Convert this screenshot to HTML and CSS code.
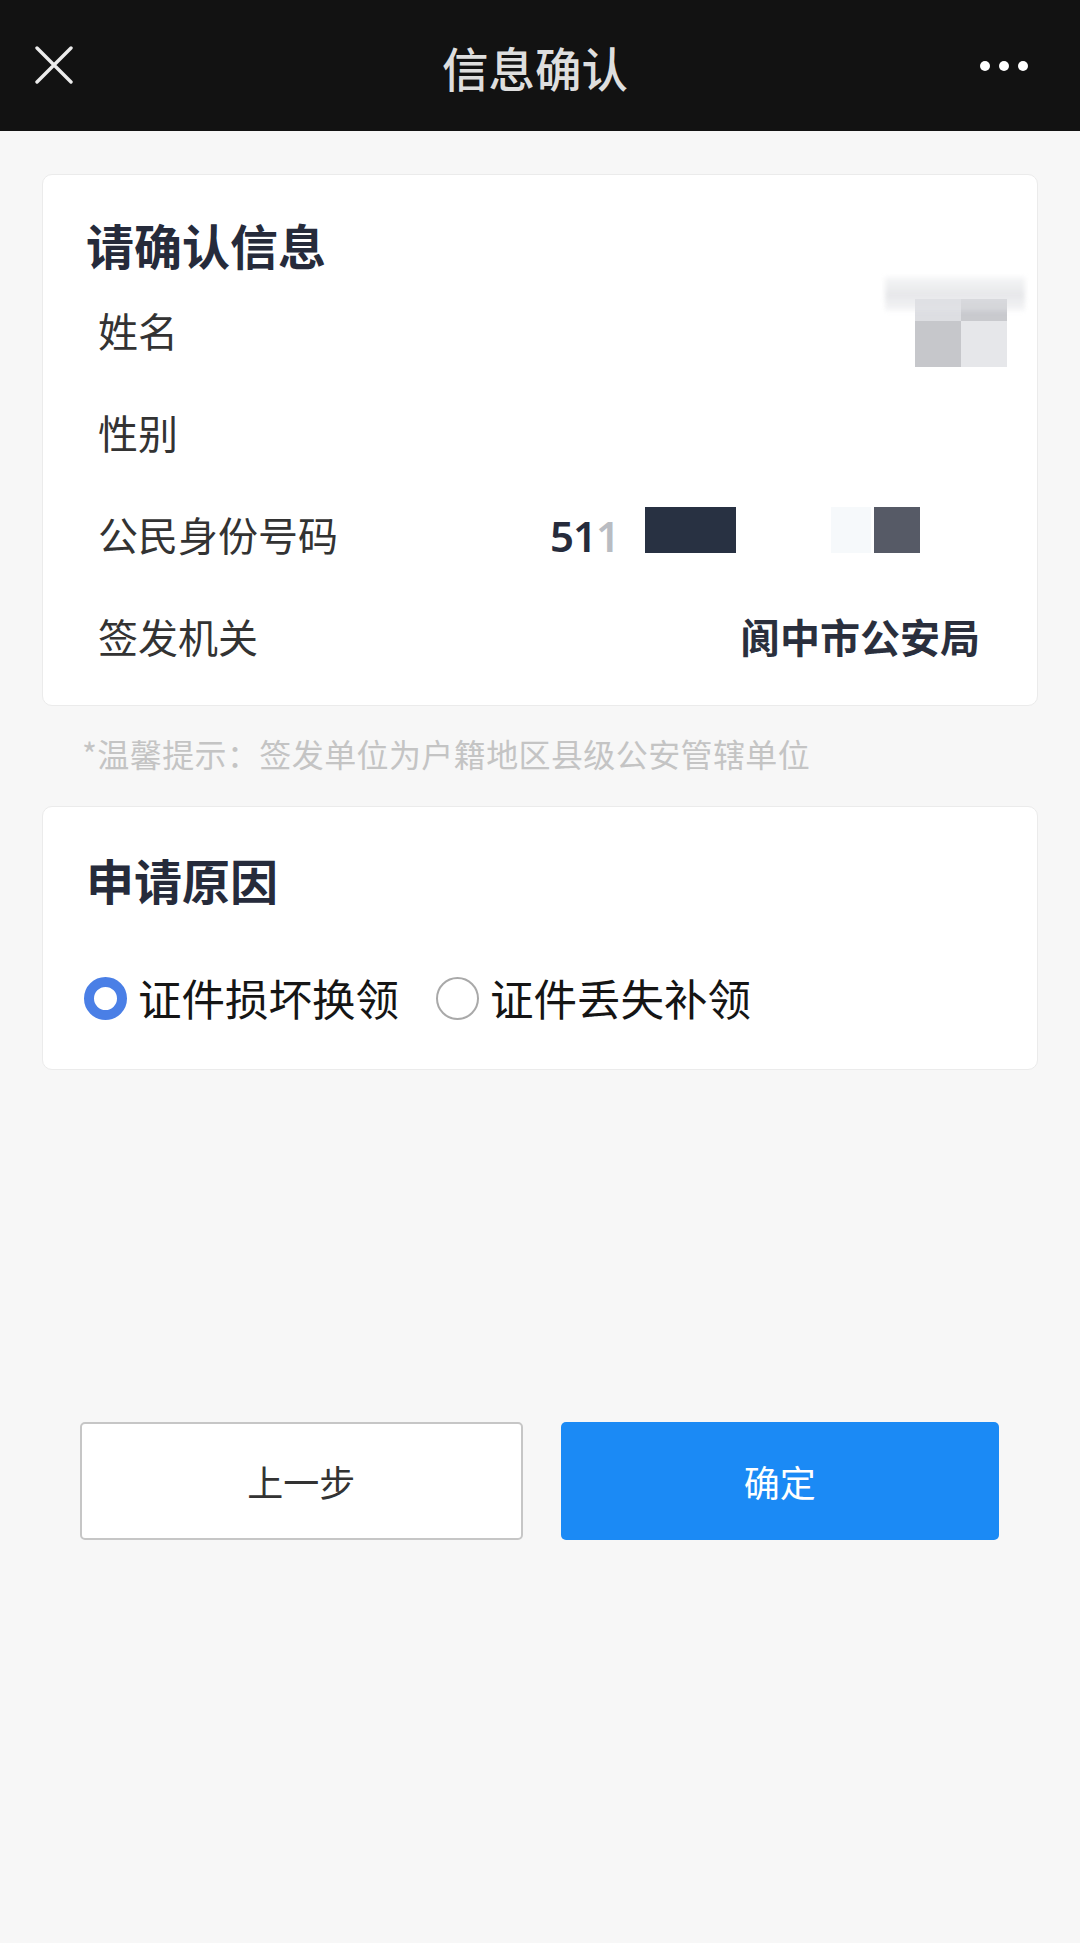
FILE: index.html
```html
<!DOCTYPE html>
<html lang="zh-CN">
<head>
  <meta charset="UTF-8" />
  <meta name="viewport" content="width=device-width, initial-scale=1.0"/>
  <title>信息确认</title>
  <link rel="stylesheet" href="styles.css">
</head>
<body>

  <header class="topbar">
    <span class="topbar-close">
      <svg width="38" height="38" viewBox="0 0 38 38"><path d="M2 2L36 36M36 2L2 36" stroke="#ececec" stroke-width="3.4" stroke-linecap="round"/></svg>
    </span>
    <h1 class="topbar-title">信息确认</h1>
    <span class="topbar-more">
      <svg width="48" height="12" viewBox="0 0 48 12"><circle cx="5" cy="6" r="5" fill="#fff"/><circle cx="24" cy="6" r="5" fill="#fff"/><circle cx="43" cy="6" r="5" fill="#fff"/></svg>
    </span>
  </header>

  <main class="content">
    <section class="card info-card">
      <h2 class="card-title">请确认信息</h2>
      <div class="info-row">
        <span class="info-label">姓名</span>
        <!-- 姓名已打码 -->
        <div class="mosaic">
          <div class="mosaic-grid">
            <span class="m1"></span><span class="m2"></span>
            <span class="m3"></span><span class="m4"></span>
          </div>
          <div class="mosaic-haze"></div>
        </div>
      </div>
      <div class="info-row">
        <span class="info-label">性别</span>
        <span class="info-value"></span>
      </div>
      <div class="info-row">
        <span class="info-label">公民身份号码</span>
        <div class="id-value">
          <span class="id-digits">51<span class="faded">1</span></span>
          <span class="id-block dark"></span>
          <span class="id-block ghost"></span>
          <span class="id-block grey"></span>
        </div>
      </div>
      <div class="info-row">
        <span class="info-label">签发机关</span>
        <span class="info-value">阆中市公安局</span>
      </div>
    </section>

    <p class="tip">*温馨提示：签发单位为户籍地区县级公安管辖单位</p>

    <section class="card reason-card">
      <h2 class="card-title">申请原因</h2>
      <div class="radio-group">
        <label class="radio-item">
          <span class="radio checked"></span>
          <span class="radio-text">证件损坏换领</span>
        </label>
        <label class="radio-item">
          <span class="radio"></span>
          <span class="radio-text">证件丢失补领</span>
        </label>
      </div>
    </section>

    <div class="button-row">
      <button class="btn btn-back">上一步</button>
      <button class="btn btn-ok">确定</button>
    </div>
  </main>

</body>
</html>
```

FILE: styles.css
```css
body {
  font-family: "Noto Sans CJK SC", "Noto Sans", sans-serif;
  background-color: #f7f7f7;
  color: #333;
  margin: 0;
  padding: 0;
}
.topbar {
  height: 131px;
  background-color: #121212;
  display: grid;
  grid-template-columns: 1fr auto 1fr;
  align-items: center;
  padding: 0 52px 0 35px;
}
.topbar-close {
  display: flex;
  align-items: center;
  margin-top: -2px;
}
.topbar-title {
  margin: 4px 0 0 7px;
  font-size: 46.5px;
  font-weight: 500;
  color: #dedede;
  line-height: 1;
}
.topbar-more {
  display: flex;
  justify-content: flex-end;
}
.content {
  padding: 43px 42px 0 42px;
}
.card {
  background-color: white;
  border: 1.5px solid #ebebeb;
  border-radius: 10px;
  padding: 0 57px 0 43px;
}
.card-title {
  margin: 0;
  font-size: 48px;
  font-weight: 700;
  line-height: 60px;
  color: #262b3b;
}
.info-card {
  padding-top: 39px;
  padding-bottom: 18px;
}
.info-card .card-title {
  margin-bottom: 5px;
}
.info-row {
  height: 102px;
  display: flex;
  align-items: center;
  justify-content: space-between;
  padding-left: 12px;
}
.info-label {
  font-size: 40px;
  color: #333;
}
.info-value {
  font-size: 40px;
  font-weight: 700;
  color: #2a2f3d;
}
.mosaic {
  position: relative;
  width: 150px;
  height: 110px;
  margin-right: -47px;
  margin-top: 0;
}
.mosaic-grid {
  position: absolute;
  left: 38px;
  top: 24px;
  display: grid;
  grid-template-columns: 46px 46px;
  grid-template-rows: 22px 46px;
}
.m1 { background-color: #dddee2; }
.m2 { background-color: #c9cace; }
.m3 { background-color: #c6c7cb; }
.m4 { background-color: #e6e7ea; }
.mosaic-haze {
  position: absolute;
  left: 8px;
  top: 2px;
  width: 140px;
  height: 34px;
  background: linear-gradient(180deg, #f2f3f4, #dfe0e3 55%, rgba(232,233,236,0.5));
  filter: blur(2px);
  opacity: 0.75;
}
.id-value {
  display: flex;
  align-items: center;
  margin-right: 60px;
  margin-top: -8px;
}
.id-digits {
  font-family: "Noto Sans", sans-serif;
  font-size: 42px;
  font-weight: 600;
  letter-spacing: -1px;
  color: #262b3b;
  margin-right: 26px;
  margin-top: 10px;
}
.faded {
  color: #b9bcc2;
}
.id-block {
  display: inline-block;
  height: 46px;
}
.id-block.dark {
  width: 91px;
  background-color: #283142;
  margin-right: 95px;
}
.id-block.ghost {
  width: 40px;
  background-color: #f6f9fb;
  margin-right: 3px;
}
.id-block.grey {
  width: 46px;
  background-color: #565a66;
}
.tip {
  margin: 25px 0 31px 40px;
  font-size: 32px;
  letter-spacing: 0.4px;
  line-height: 44px;
  color: #c4c4c4;
}
.reason-card {
  padding-top: 42px;
  padding-bottom: 41px;
}
.radio-group {
  display: flex;
  align-items: center;
  gap: 37px;
  margin-top: 59px;
  margin-left: -2px;
  height: 60px;
}
.radio-item {
  display: flex;
  align-items: center;
  gap: 11px;
}
.radio {
  width: 43px;
  height: 43px;
  border-radius: 50%;
  box-sizing: border-box;
  border: 2px solid #a9a9a9;
  background-color: white;
}
.radio.checked {
  border: 10px solid #4a7fe6;
}
.radio-text {
  font-size: 43.5px;
  color: #151515;
  line-height: 60px;
}
.button-row {
  display: flex;
  gap: 38px;
  margin-top: 352px;
  padding: 0 39px 0 38px;
}
.btn {
  flex: 1;
  height: 118px;
  font-family: "Noto Sans CJK SC", sans-serif;
  font-size: 36px;
  border-radius: 5px;
  cursor: pointer;
}
.btn-back {
  background-color: white;
  border: 2px solid #c6c6c6;
  color: #333;
}
.btn-ok {
  background-color: #1b8af5;
  border: none;
  color: white;
}
```
